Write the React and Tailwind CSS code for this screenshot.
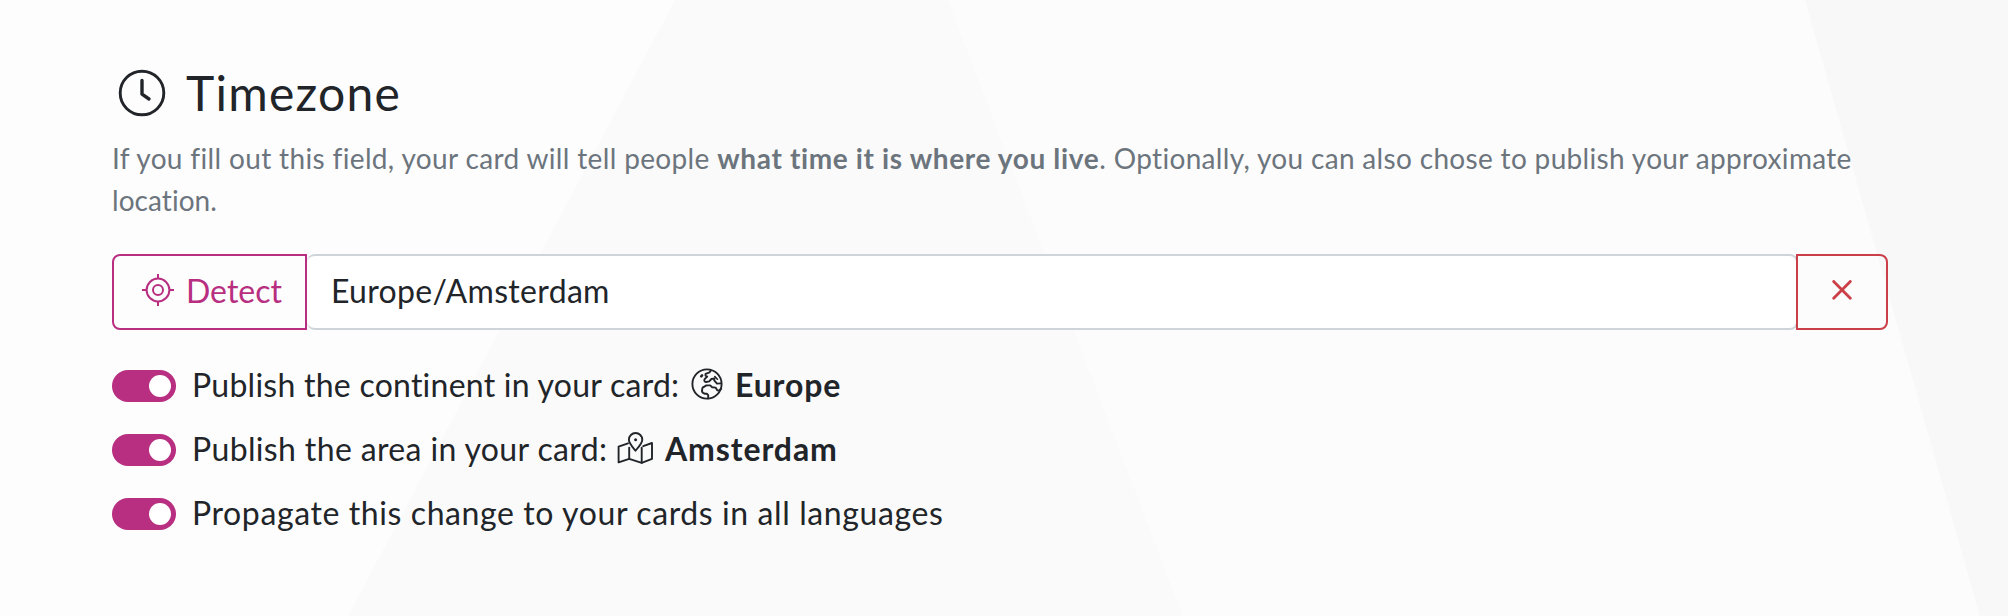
function Backdrop() {
  return (
    <svg className="absolute inset-0 h-full w-full" viewBox="0 0 2008 616" preserveAspectRatio="none" aria-hidden="true">
      <polygon points="675,0 948,0 1183,616 348,616" fill="#fafafa" />
      <polygon points="948,0 1805,0 1980,616 1183,616" fill="#fcfcfc" />
      <polygon points="1805,0 2008,0 2008,616 1980,616" fill="#f8f8f8" />
    </svg>
  );
}

function ClockIcon() {
  return (
    <svg className="ml-1.5 h-12 w-12 shrink-0" viewBox="0 0 48 48" fill="none" stroke="currentColor" strokeLinecap="round" strokeLinejoin="round">
      <circle cx="24" cy="24" r="21.8" strokeWidth="2.9" />
      <path d="M24 11.5V25.2L31 30" strokeWidth="3.4" />
    </svg>
  );
}

function TargetIcon() {
  return (
    <svg className="h-8 w-8 shrink-0" viewBox="0 0 32 32" fill="none" stroke="currentColor" strokeWidth="2">
      <circle cx="16" cy="16" r="11.4" />
      <circle cx="16" cy="16" r="5" />
      <path d="M16 0V4.6M16 27.4V32M0 16H4.6M27.4 16H32" />
    </svg>
  );
}

function CloseIcon() {
  return (
    <svg className="h-5 w-5" viewBox="0 0 20 20" fill="none" stroke="currentColor" strokeWidth="2.8" strokeLinecap="round">
      <path d="M1.7 1.4L18.3 18.2M18.3 1.4L1.7 18.2" />
    </svg>
  );
}

function GlobeIcon() {
  return (
    <svg className="h-8 w-8 shrink-0" viewBox="0 0 32 32" fill="none" stroke="currentColor" strokeWidth="1.9" strokeLinecap="round" strokeLinejoin="round">
      <circle cx="16" cy="16" r="14.6" />
      <path d="M19.8 2.6L18.6 4.3L14.6 5.8L14.5 7.6L16.2 8.6L13.6 11.2Q12.6 13.6 15 14L18.2 13.4L20.4 11L23.4 10.4L23.2 12.4L26 15.6L29.6 15.4" />
      <path d="M30.2 20.8L27.8 22.6L26.4 22.4L24.6 19.6L21.2 19.2L19.2 17.4H15.4L11.6 19.6L11 22.2Q10.6 25.2 14 25.8H16L17.2 27.2V30.4" />
      <path d="M10.2 8.4L11.1 7.4" strokeWidth="2.5" />
      <path d="M23.8 8.6L26.4 11.2" strokeWidth="1.6" />
    </svg>
  );
}

function MapIcon() {
  return (
    <svg className="h-9 w-9 shrink-0" viewBox="0 0 36 36" fill="none" stroke="currentColor" strokeWidth="1.9" strokeLinecap="round" strokeLinejoin="round">
      <path d="M11 12.3L1.6 15.6V31.4L12.2 27.8L24.7 31.8L35 27.9V12L26.2 15.2" />
      <path d="M12.2 16.6V27.8M24.7 16.6V31.8" />
      <path d="M18.5 19.7C16.2 16.8 11.9 12.2 11.9 8.7A6.7 6.7 0 0 1 25.3 8.7C25.3 12.2 20.8 16.8 18.5 19.7Z" />
      <circle cx="18.6" cy="8.7" r="1.5" fill="currentColor" stroke="none" />
    </svg>
  );
}

function SwitchRow({ children }) {
  return (
    <label className="flex h-12 items-center">
      <span role="switch" aria-checked="true" className="flex h-8 w-16 shrink-0 items-center justify-end rounded-full bg-[#b82e80] pr-[5px]">
        <span className="h-[22px] w-[22px] rounded-full bg-white" />
      </span>
      <span className="ml-4 flex h-12 items-center whitespace-nowrap">{children}</span>
    </label>
  );
}

export default function App() {
  return (
    <div className="relative h-[616px] w-full overflow-hidden bg-[#fdfdfd] font-['Lato','Nunito',sans-serif] text-[32px] leading-[48px] text-[#212529]">
      <Backdrop />
      <main className="relative ml-28 flex w-[1776px] flex-col pt-16">
        <h2 className="flex h-[58px] items-center text-[48px] leading-[58px] font-normal">
          <ClockIcon />
          <span className="ml-5 tracking-[1.25px]">Timezone</span>
        </h2>

        <p className="mt-[15px] text-[28px] leading-[42px] text-[#6c757d]">
          <span className="tracking-[0.35px]">If you fill out this field, your card will tell people </span>
          <strong className="font-bold tracking-[0.64px]">what time it is where you live</strong>
          <span className="tracking-[0.33px]">. Optionally, you can also chose to publish your approximate <span className="tracking-[0.05px]">location.</span></span>
        </p>

        <div className="mt-[33px] flex h-[76px]">
          <button className="flex w-[195px] shrink-0 items-center rounded-l-lg border-2 border-[#b82e80] pb-1 pl-7 text-[#b82e80]">
            <TargetIcon />
            <span className="mt-0.5 ml-3">Detect</span>
          </button>
          <div className="-mr-0.5 flex flex-1 items-center rounded-lg border-2 border-l-0 border-[#ced4da] bg-white pb-[3px] pl-6 tracking-[0.33px]">
            Europe/Amsterdam
          </div>
          <button aria-label="Clear" className="relative flex w-[92px] shrink-0 items-center justify-center rounded-r-lg border-2 border-[#cb4048] pb-1 text-[#cb4048]">
            <CloseIcon />
          </button>
        </div>

        <div className="mt-8 flex flex-col gap-4">
          <SwitchRow>
            <span className="w-[499px] pb-[3px] tracking-[0.25px]">Publish the continent in your card:</span>
            <span className="pb-1"><GlobeIcon /></span>
            <strong className="ml-3 pb-[3px] font-bold tracking-[0.85px]">Europe</strong>
          </SwitchRow>
          <SwitchRow>
            <span className="w-[425px] pb-[3px] tracking-[0.36px]">Publish the area in your card:</span>
            <span className="pb-0.5"><MapIcon /></span>
            <strong className="ml-3 pb-[3px] font-bold tracking-[0.9px]">Amsterdam</strong>
          </SwitchRow>
          <SwitchRow>
            <span className="pb-[3px] tracking-[0.6px]">Propagate this change to your cards in all languages</span>
          </SwitchRow>
        </div>
      </main>
    </div>
  );
}
